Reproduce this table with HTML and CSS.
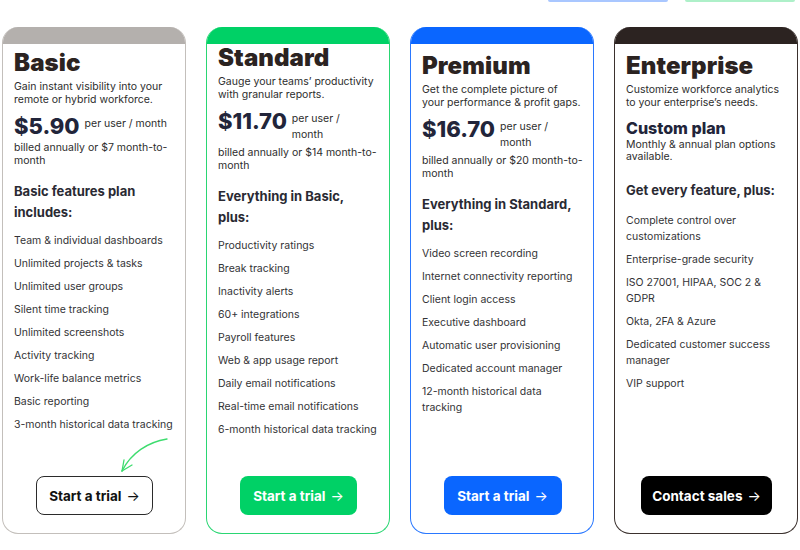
FILE: index.html
```html
<!DOCTYPE html>
<html lang="en">
<head>
<meta charset="utf-8">
<title>Pricing</title>
<link rel="stylesheet" href="styles.css">
</head>
<body>
<div class="topbar">
  <span class="tab tab-blue"></span>
  <span class="tab tab-green"></span>
</div>
<div class="plans">
  <section class="card card-basic">
    <div class="band"></div>
    <div class="body">
      <h2 class="title">Basic</h2>
      <p class="desc">Gain instant visibility into your<br>remote or hybrid workforce.</p>
      <div class="price-row">
        <span class="price">$5.90</span>
        <span class="per">per user / month</span>
      </div>
      <p class="billed">billed annually or $7 month-to-month</p>
      <h3 class="feat-head">Basic features plan<br>includes:</h3>
      <ul class="features">
        <li>Team &amp; individual dashboards</li>
        <li>Unlimited projects &amp; tasks</li>
        <li>Unlimited user groups</li>
        <li>Silent time tracking</li>
        <li>Unlimited screenshots</li>
        <li>Activity tracking</li>
        <li>Work-life balance metrics</li>
        <li>Basic reporting</li>
        <li>3-month historical data tracking</li>
      </ul>
      <a class="btn btn-outline" href="#">Start a trial <span class="arr">→</span></a>
    </div>
    <svg class="hint-arrow" width="60" height="42" viewBox="0 0 60 42" fill="none" stroke="#3ddc6e" stroke-width="1.3" stroke-linecap="round">
      <path d="M49 3 C 30 6, 13 17, 4 35"/>
      <path d="M4 35 L 6 24"/>
      <path d="M4 35 L 14 29"/>
    </svg>
  </section>

  <section class="card card-standard">
    <div class="band"></div>
    <div class="body">
      <h2 class="title">Standard</h2>
      <p class="desc">Gauge your teams’ productivity<br>with granular reports.</p>
      <div class="price-row">
        <span class="price">$11.70</span>
        <span class="per">per user /<br>month</span>
      </div>
      <p class="billed">billed annually or $14 month-to-month</p>
      <h3 class="feat-head">Everything in Basic,<br>plus:</h3>
      <ul class="features">
        <li>Productivity ratings</li>
        <li>Break tracking</li>
        <li>Inactivity alerts</li>
        <li>60+ integrations</li>
        <li>Payroll features</li>
        <li>Web &amp; app usage report</li>
        <li>Daily email notifications</li>
        <li>Real-time email notifications</li>
        <li>6-month historical data tracking</li>
      </ul>
      <a class="btn btn-green" href="#">Start a trial <span class="arr">→</span></a>
    </div>
  </section>

  <section class="card card-premium">
    <div class="band"></div>
    <div class="body">
      <h2 class="title">Premium</h2>
      <p class="desc">Get the complete picture of<br>your performance &amp; profit gaps.</p>
      <div class="price-row">
        <span class="price">$16.70</span>
        <span class="per">per user /<br>month</span>
      </div>
      <p class="billed">billed annually or $20 month-to-month</p>
      <h3 class="feat-head">Everything in Standard,<br>plus:</h3>
      <ul class="features">
        <li>Video screen recording</li>
        <li>Internet connectivity reporting</li>
        <li>Client login access</li>
        <li>Executive dashboard</li>
        <li>Automatic user provisioning</li>
        <li>Dedicated account manager</li>
        <li>12-month historical data<br>tracking</li>
      </ul>
      <a class="btn btn-blue" href="#">Start a trial <span class="arr">→</span></a>
    </div>
  </section>

  <section class="card card-enterprise">
    <div class="band"></div>
    <div class="body">
      <h2 class="title">Enterprise</h2>
      <p class="desc">Customize workforce analytics<br>to your enterprise’s needs.</p>
      <div class="custom">Custom plan</div>
      <p class="custom-note">Monthly &amp; annual plan options<br>available.</p>
      <h3 class="feat-head feat-head-ent">Get every feature, plus:</h3>
      <ul class="features features-ent">
        <li>Complete control over<br>customizations</li>
        <li>Enterprise-grade security</li>
        <li>ISO 27001, HIPAA, SOC 2 &amp;<br>GDPR</li>
        <li>Okta, 2FA &amp; Azure</li>
        <li>Dedicated customer success<br>manager</li>
        <li>VIP support</li>
      </ul>
      <a class="btn btn-black" href="#">Contact sales <span class="arr">→</span></a>
    </div>
  </section>
</div>
</body>
</html>
```
FILE: styles.css
```css
* { box-sizing: border-box; }
html, body { margin: 0; padding: 0; background: #ffffff; }
body {
  font-family: Inter, "Liberation Sans", sans-serif;
  color: #2c2c30;
  width: 800px;
  height: 550px;
  overflow: hidden;
}
.topbar {
  display: flex;
  gap: 17px;
  padding-left: 548px;
  height: 2px;
}
.tab { display: block; height: 2px; border-radius: 0 0 2px 2px; }
.tab-blue { width: 120px; background: #a9c7ff; }
.tab-green { width: 110px; background: #aef0c9; }

.plans {
  display: flex;
  gap: 20px;
  padding-left: 2px;
  margin-top: 25px;
}
.card {
  position: relative;
  width: 184px;
  height: 507px;
  border: 1px solid #c3bfbb;
  border-top: 0;
  border-radius: 16px;
  overflow: hidden;
  display: flex;
  flex-direction: column;
  background: #fff;
}
.band { height: 17px; flex: none; background: #b4b0ad; }
.card-standard { border-color: #2ad673; }
.card-standard .band { background: #00d166; }
.card-premium { border-color: #2a78ff; }
.card-premium .band { background: #0a66ff; }
.card-enterprise { border-color: #3b312e; }
.card-enterprise .band { background: #2c2321; }

.body {
  flex: 1;
  display: flex;
  flex-direction: column;
  padding: 5px 10px 18px 11px;
}
.card-standard .body { padding-top: 0; }
.card-premium .body, .card-enterprise .body { padding-top: 8px; }

.title {
  margin: 0;
  font-size: 24px;
  line-height: 28px;
  font-weight: 900;
  color: #2b2321;
  letter-spacing: 0.1px;
}
.desc {
  margin: 3px 0 0;
  font-size: 10.5px;
  line-height: 13px;
  color: #2d2d2d;
}
.price-row {
  display: flex;
  align-items: flex-start;
  gap: 5px;
  margin-top: 8px;
}
.price {
  font-size: 22px;
  line-height: 24px;
  font-weight: 800;
  color: #22253a;
}
.per {
  padding-top: 2px;
  font-size: 10.5px;
  line-height: 16px;
  color: #2d2d2d;
}
.billed {
  margin: 4px 0 0;
  font-size: 10.5px;
  line-height: 12.5px;
  color: #2d2d2d;
}
.custom {
  margin-top: 9px;
  font-size: 16px;
  line-height: 20px;
  font-weight: 800;
  color: #22253a;
}
.custom-note {
  margin: 1px 0 0;
  font-size: 10.5px;
  line-height: 12px;
  color: #2d2d2d;
}
.feat-head {
  margin: 14px 0 0;
  font-size: 13px;
  line-height: 21px;
  font-weight: 700;
  color: #2a2a33;
}
.feat-head-ent { margin-top: 17px; }
.features {
  list-style: none;
  margin: 10px 0 0;
  padding: 0;
  display: flex;
  flex-direction: column;
  gap: 7px;
}
.features-ent { margin-top: 12px; }
.features li {
  font-size: 10.5px;
  line-height: 16px;
  color: #333336;
}
.btn {
  margin-top: auto;
  align-self: center;
  height: 39px;
  display: flex;
  align-items: center;
  justify-content: center;
  gap: 5px;
  padding: 0 8px;
  border-radius: 8px;
  font-size: 13.5px;
  font-weight: 700;
  white-space: nowrap;
  text-decoration: none;
  color: #fff;
}
.arr { font-weight: 400; font-size: 14px; }
.btn-outline {
  width: 117px;
  border: 1.5px solid #2b2b2b;
  color: #111;
  background: #fff;
}
.btn-green { width: 117px; background: #00d166; }
.btn-blue { width: 118px; background: #0a66ff; }
.btn-black { width: 131px; background: #000; }

.hint-arrow {
  position: absolute;
  left: 115px;
  top: 409px;
}
```
